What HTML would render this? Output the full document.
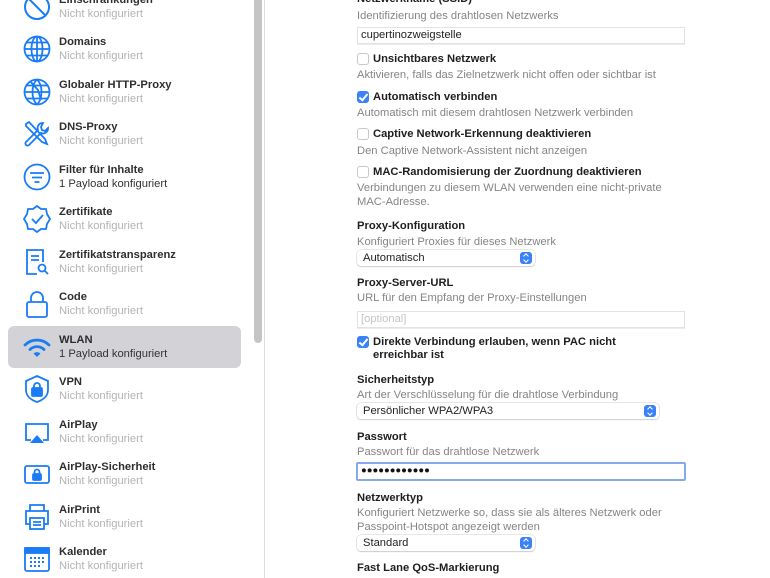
<!DOCTYPE html>
<html><head><meta charset="utf-8"><style>
*{margin:0;padding:0;box-sizing:border-box}
body{width:770px;height:578px;overflow:hidden;background:#fff;font-family:"Liberation Sans",sans-serif;font-size:11.2px;position:relative}
.a{position:absolute;line-height:14px;white-space:nowrap}
.t{font-weight:bold;color:#2e2e2e}
.s{color:#b3b3b3}
.p{color:#333}
.d{color:#858585}
.b{font-weight:bold;color:#1e1e1e}
.ic{position:absolute;left:22px;width:30px;height:30px}
.fld{position:absolute;left:357px;width:328px;height:17px;border:1px solid #e2e2e2;background:#fff;box-shadow:0 1px 0 #ececec}
.sel{position:absolute;left:357px;height:16px;border-radius:4px;background:#fff;box-shadow:0 0 0 0.5px #ccc,0 1px 1px #ccc}
.sel i{position:absolute;right:3px;top:2px;width:12px;height:12px;border-radius:3px;background:#3b82f6}
.sel i:before{content:"";position:absolute;left:4px;top:2px;width:3px;height:3px;border-left:1px solid #fff;border-top:1px solid #fff;transform:rotate(45deg)}
.sel i:after{content:"";position:absolute;left:4px;top:6px;width:3px;height:3px;border-right:1px solid #fff;border-bottom:1px solid #fff;transform:rotate(45deg)}
.cb{position:absolute;left:357px;width:12px;height:12px;border:1px solid #c8c8c8;border-radius:3px;background:#fff}
.cb.on{background:#3b82f6;border-color:#3b82f6}
.cb.on:after{content:"";position:absolute;left:3px;top:0px;width:3px;height:7px;border-right:2px solid #fff;border-bottom:2px solid #fff;transform:rotate(40deg)}
</style></head><body>
<div style="position:absolute;left:8px;top:326px;width:233px;height:42px;background:#d3d2d6;border-radius:6px"></div>
<div style="position:absolute;left:254px;top:0;width:8px;height:343px;background:#c5c5c5;border-radius:0 0 4px 4px"></div>
<div style="position:absolute;left:264px;top:0;width:1px;height:578px;background:#dcdcdc"></div>

<svg class="ic" style="top:-8px" viewBox="0 0 30 30" fill="none" stroke="#1a7cf5" stroke-width="2"><circle cx="15" cy="15" r="12"/><path d="M7 7L23 23"/></svg>
<div class="a t" style="left:59px;top:-7px">Einschränkungen</div><div class="a s" style="left:59px;top:7px">Nicht konfiguriert</div>

<svg class="ic" style="top:34px" viewBox="0 0 30 30" fill="none" stroke="#1a7cf5" stroke-width="1.8"><circle cx="15" cy="15" r="12.5"/><ellipse cx="15" cy="15" rx="5.5" ry="12.5"/><path d="M15 2.5V27.5M2.5 15H27.5M4.5 8.5H25.5M4.5 21.5H25.5"/></svg>
<div class="a t" style="left:59px;top:35px">Domains</div><div class="a s" style="left:59px;top:49px">Nicht konfiguriert</div>

<svg class="ic" style="top:77px" viewBox="0 0 30 30" fill="none" stroke="#1a7cf5" stroke-width="1.8"><circle cx="15" cy="15" r="12.5"/><path d="M15 2.5C9 8 9 22 15 27.5M15 2.5C21 8 21 22 15 27.5M2.5 15H27.5M4.5 8.5H25.5M4.5 21.5H25.5M8 4l8 9 3 10"/></svg>
<div class="a t" style="left:59px;top:78px">Globaler HTTP-Proxy</div><div class="a s" style="left:59px;top:92px">Nicht konfiguriert</div>

<svg class="ic" style="top:119px" viewBox="0 0 30 30" fill="none" stroke="#1a7cf5" stroke-width="1.8"><path d="M4 5l3-2 16 17 2 5-5-2L4 7z"/><path d="M21 4a5 5 0 0 0-5 7L4 23a2 2 0 0 0 3 3l12-12a5 5 0 0 0 7-5l-3 3-3-1-1-3z"/></svg>
<div class="a t" style="left:59px;top:120px">DNS-Proxy</div><div class="a s" style="left:59px;top:134px">Nicht konfiguriert</div>

<svg class="ic" style="top:162px" viewBox="0 0 30 30" fill="none" stroke="#1a7cf5" stroke-width="1.8"><circle cx="15" cy="15" r="12.5"/><path d="M8 11H22M10 15.5H20M12.5 20H17.5"/></svg>
<div class="a t" style="left:59px;top:163px">Filter für Inhalte</div><div class="a p" style="left:59px;top:177px">1 Payload konfiguriert</div>

<svg class="ic" style="top:204px" viewBox="0 0 30 30" fill="none" stroke="#1a7cf5" stroke-width="1.8"><path d="M15 2l4 3 5 0 1 5 3 5-3 5-1 5-5 0-4 3-4-3-5 0-1-5-3-5 3-5 1-5 5 0z"/><path d="M10 15l4 4 7-8"/></svg>
<div class="a t" style="left:59px;top:205px">Zertifikate</div><div class="a s" style="left:59px;top:219px">Nicht konfiguriert</div>

<svg class="ic" style="top:247px" viewBox="0 0 30 30" fill="none" stroke="#1a7cf5" stroke-width="1.8"><path d="M15 27H5V3H21V15"/><path d="M9 9H17M9 13H17"/><circle cx="20" cy="21" r="3.5"/><path d="M22.5 23.5L26 27"/></svg>
<div class="a t" style="left:59px;top:248px">Zertifikatstransparenz</div><div class="a s" style="left:59px;top:262px">Nicht konfiguriert</div>

<svg class="ic" style="top:289px" viewBox="0 0 30 30" fill="none" stroke="#1a7cf5" stroke-width="1.8"><path d="M9 13V9a6 6 0 0 1 12 0v4"/><rect x="5" y="13" width="20" height="15" rx="2"/></svg>
<div class="a t" style="left:59px;top:290px">Code</div><div class="a s" style="left:59px;top:304px">Nicht konfiguriert</div>

<svg class="ic" style="top:332px" viewBox="0 0 30 30" fill="none" stroke="#1a7cf5" stroke-width="2.8" stroke-linecap="round"><path d="M3 13a17 17 0 0 1 24 0"/><path d="M8 17.5a10 10 0 0 1 14 0"/><path d="M11.5 21.5L15 25L18.5 21.5A5 5 0 0 0 11.5 21.5z" fill="#1a7cf5" stroke="none"/></svg>
<div class="a t" style="left:59px;top:333px">WLAN</div><div class="a p" style="left:59px;top:347px">1 Payload konfiguriert</div>

<svg class="ic" style="top:374px" viewBox="0 0 30 30" fill="none" stroke="#1a7cf5" stroke-width="1.8"><path d="M15 2l11 5v9c0 6-5 10-11 12C9 26 4 22 4 16V7z"/><path d="M12 14v-2a3 3 0 0 1 6 0v2" /><rect x="10" y="14" width="10" height="8" rx="1" fill="#1a7cf5"/></svg>
<div class="a t" style="left:59px;top:375px">VPN</div><div class="a s" style="left:59px;top:389px">Nicht konfiguriert</div>

<svg class="ic" style="top:417px" viewBox="0 0 30 30" fill="none" stroke="#1a7cf5" stroke-width="1.8"><path d="M9 23H4V7H26V23H21"/><path d="M15 18l7 8H8z" fill="#1a7cf5" stroke="none"/></svg>
<div class="a t" style="left:59px;top:418px">AirPlay</div><div class="a s" style="left:59px;top:432px">Nicht konfiguriert</div>

<svg class="ic" style="top:459px" viewBox="0 0 30 30" fill="none" stroke="#1a7cf5" stroke-width="1.8"><rect x="3" y="7" width="24" height="17" rx="2"/><path d="M12.5 15v-2a2.5 2.5 0 0 1 5 0v2"/><rect x="11" y="15" width="8" height="6" rx="1" fill="#1a7cf5"/></svg>
<div class="a t" style="left:59px;top:460px">AirPlay-Sicherheit</div><div class="a s" style="left:59px;top:474px">Nicht konfiguriert</div>

<svg class="ic" style="top:502px" viewBox="0 0 30 30" fill="none" stroke="#1a7cf5" stroke-width="1.8"><path d="M8 9V3H22V9"/><path d="M8 22H4V9H26V22H22"/><rect x="8" y="16" width="14" height="11"/><path d="M11 20H19M11 23H19"/></svg>
<div class="a t" style="left:59px;top:503px">AirPrint</div><div class="a s" style="left:59px;top:517px">Nicht konfiguriert</div>

<svg class="ic" style="top:544px" viewBox="0 0 30 30" fill="none" stroke="#1a7cf5" stroke-width="1.8"><rect x="3" y="4" width="24" height="23" rx="2"/><rect x="3" y="4" width="24" height="5" fill="#1a7cf5"/><g fill="#1a7cf5" stroke="none"><rect x="8" y="13" width="2" height="2"/><rect x="12" y="13" width="2" height="2"/><rect x="16" y="13" width="2" height="2"/><rect x="20" y="13" width="2" height="2"/><rect x="8" y="17" width="2" height="2"/><rect x="12" y="17" width="2" height="2"/><rect x="16" y="17" width="2" height="2"/><rect x="20" y="17" width="2" height="2"/><rect x="8" y="21" width="2" height="2"/><rect x="12" y="21" width="2" height="2"/><rect x="16" y="21" width="2" height="2"/></g></svg>
<div class="a t" style="left:59px;top:545px">Kalender</div><div class="a s" style="left:59px;top:559px">Nicht konfiguriert</div>

<div class="a b" style="left:357px;top:-8px">Netzwerkname (SSID)</div>
<div class="a d" style="left:357px;top:9px">Identifizierung des drahtlosen Netzwerks</div>
<div class="fld" style="top:27px"></div><div class="a" style="left:361px;top:28px;color:#222">cupertinozweigstelle</div>

<div class="cb" style="top:53px"></div><div class="a b" style="left:373px;top:52px">Unsichtbares Netzwerk</div>
<div class="a d" style="left:357px;top:68px">Aktivieren, falls das Zielnetzwerk nicht offen oder sichtbar ist</div>

<div class="cb on" style="top:91px"></div><div class="a b" style="left:373px;top:90px">Automatisch verbinden</div>
<div class="a d" style="left:357px;top:106px">Automatisch mit diesem drahtlosen Netzwerk verbinden</div>

<div class="cb" style="top:128px"></div><div class="a b" style="left:373px;top:127px">Captive Network-Erkennung deaktivieren</div>
<div class="a d" style="left:357px;top:144px">Den Captive Network-Assistent nicht anzeigen</div>

<div class="cb" style="top:166px"></div><div class="a b" style="left:373px;top:165px">MAC-Randomisierung der Zuordnung deaktivieren</div>
<div class="a d" style="left:357px;top:181px">Verbindungen zu diesem WLAN verwenden eine nicht-private</div>
<div class="a d" style="left:357px;top:195px">MAC-Adresse.</div>

<div class="a b" style="left:357px;top:219px">Proxy-Konfiguration</div>
<div class="a d" style="left:357px;top:235px">Konfiguriert Proxies für dieses Netzwerk</div>
<div class="sel" style="top:250px;width:178px"><i></i></div><div class="a" style="left:363px;top:251px;color:#222">Automatisch</div>

<div class="a b" style="left:357px;top:276px">Proxy-Server-URL</div>
<div class="a d" style="left:357px;top:291px">URL für den Empfang der Proxy-Einstellungen</div>
<div class="fld" style="top:311px"></div><div class="a" style="left:361px;top:312px;color:#c4c4c4">[optional]</div>

<div class="cb on" style="top:336px"></div><div class="a b" style="left:373px;top:335px">Direkte Verbindung erlauben, wenn PAC nicht</div>
<div class="a b" style="left:373px;top:348px">erreichbar ist</div>

<div class="a b" style="left:357px;top:373px">Sicherheitstyp</div>
<div class="a d" style="left:357px;top:388px">Art der Verschlüsselung für die drahtlose Verbindung</div>
<div class="sel" style="top:403px;width:302px"><i></i></div><div class="a" style="left:363px;top:404px;color:#222">Persönlicher WPA2/WPA3</div>

<div class="a b" style="left:357px;top:430px">Passwort</div>
<div class="a d" style="left:357px;top:445px">Passwort für das drahtlose Netzwerk</div>
<div style="position:absolute;left:356px;top:462px;width:330px;height:19px;border:2px solid #86a9ee;border-radius:2px;background:#fff"></div>
<div class="a" style="left:361px;top:464px;color:#111;letter-spacing:0px;font-size:9.5px">●●●●●●●●●●●●</div>

<div class="a b" style="left:357px;top:491px">Netzwerktyp</div>
<div class="a d" style="left:357px;top:506px">Konfiguriert Netzwerke so, dass sie als älteres Netzwerk oder</div>
<div class="a d" style="left:357px;top:520px">Passpoint-Hotspot angezeigt werden</div>
<div class="sel" style="top:535px;width:178px"><i></i></div><div class="a" style="left:363px;top:536px;color:#222">Standard</div>

<div class="a b" style="left:357px;top:561px">Fast Lane QoS-Markierung</div>
</body></html>
